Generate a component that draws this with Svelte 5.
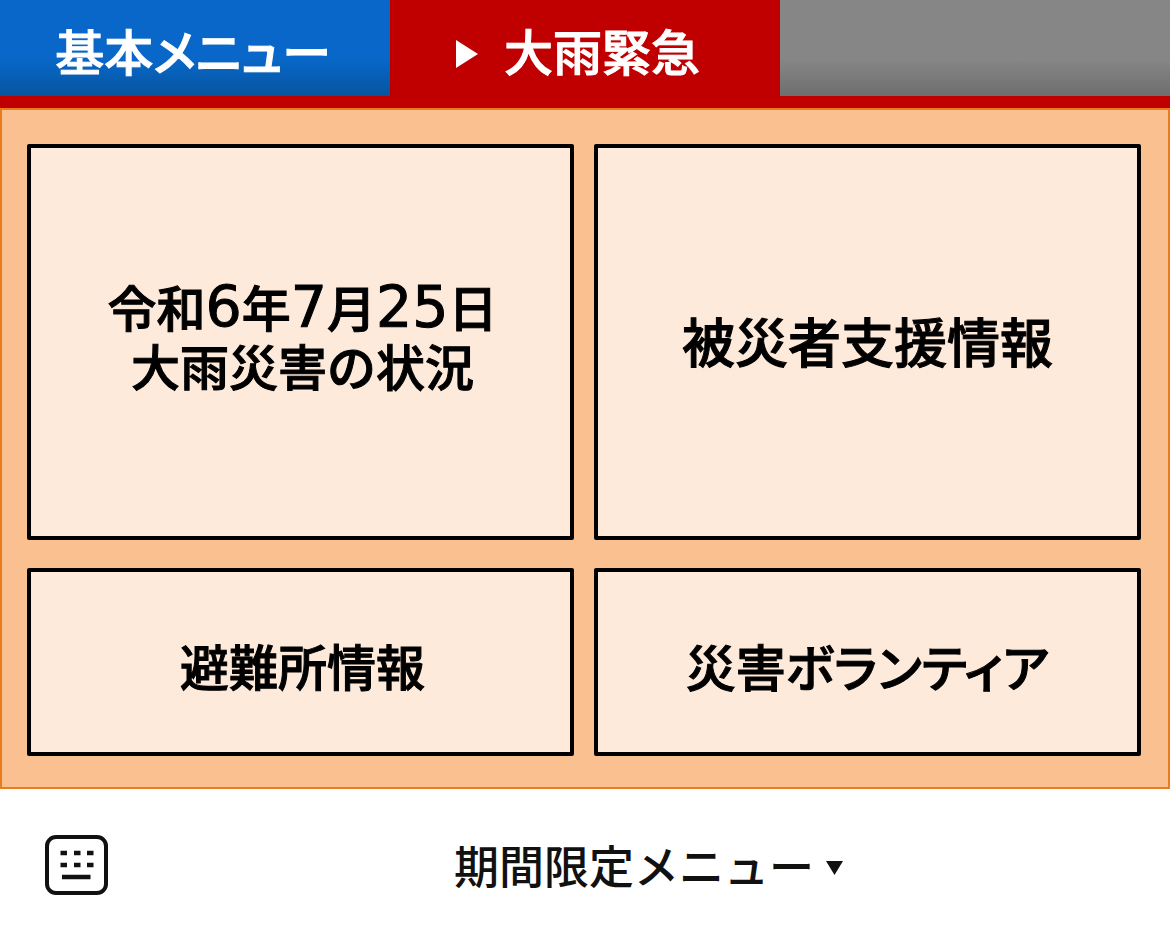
<script lang="ts">
	interface Card {
		id: string
		lines: string[]
	}

	const cards: Card[] = [
		{ id: 'status', lines: ['令和6年7月25日', '大雨災害の状況'] },
		{ id: 'support', lines: ['被災者支援情報'] },
		{ id: 'shelter', lines: ['避難所情報'] },
		{ id: 'volunteer', lines: ['災害ボランティア'] },
	]

	let active = $state('rain')

	// digits are set in a wider face than the kanji around them
	function splitDigits(line: string) {
		return line.split(/(\d+)/).filter(Boolean)
	}
</script>

<div class="menu">
	<nav class="tabs">
		<button class="tab tab-basic" onclick={() => active = 'basic'}>基本メニュー</button>
		<button class="tab tab-rain" aria-current={active === 'rain'} onclick={() => active = 'rain'}>
			<svg class="tab-arrow" viewBox="0 0 22 28" aria-hidden="true">
				<path d="M0 0 22 14 0 28Z" />
			</svg>
			大雨緊急
		</button>
		<span class="tab tab-empty"></span>
	</nav>

	<main class="panel">
		{#each cards as card (card.id)}
			<button class="card {card.id}">
				{#each card.lines as line}
					<span class="line">
						{#each splitDigits(line) as part}{#if /\d/.test(part)}<span class="digits">{part}</span>{:else}{part}{/if}{/each}
					</span>
				{/each}
			</button>
		{/each}
	</main>

	<footer class="bar">
		<button class="keyboard" aria-label="キーボード">
			<svg viewBox="0 0 64 60" aria-hidden="true">
				<rect x="2" y="2" width="59" height="56" rx="9" fill="none" stroke="#111" stroke-width="4" />
				<path
					d="M15.500 18h6.500M29 18h6.500M42 18h6.500M15.500 30h6.500M29 30h6.500M42 30h6.500M17 42h28.500"
					fill="none"
					stroke="#111"
					stroke-width="4.500"
				/>
			</svg>
		</button>
		<button class="toggle">
			期間限定メニュー
			<svg class="caret" viewBox="0 0 17 14" aria-hidden="true">
				<path d="M0 0H17L8.500 14Z" />
			</svg>
		</button>
	</footer>
</div>

<style>
	:global(body) {
		margin: 0;
		background: #fff;
	}

	.menu {
		font-family: 'Noto Sans CJK JP', sans-serif;
		font-weight: 500;
		color: #000;
	}

	button {
		margin: 0;
		padding: 0;
		border: none;
		background: none;
		font: inherit;
		color: inherit;
		cursor: pointer;
	}

	.tabs {
		display: grid;
		grid-template-columns: repeat(3, 1fr);
		border-bottom: 12px solid #c00000;
	}

	.tab {
		display: flex;
		align-items: center;
		justify-content: center;
		min-height: 96px;
		padding-top: 4px;
		box-sizing: border-box;
		font-size: 49px;
		font-feature-settings: 'palt';
		line-height: 58px;
		color: #fff;
		-webkit-text-stroke: 1px currentColor;
	}

	.tab-basic {
		padding-right: 4px;
		background: linear-gradient(#0867c8 62%, #07559f);
	}

	.tab-rain {
		gap: 26px;
		padding-right: 14px;
		background: #c00000;
	}

	.tab-empty {
		background: linear-gradient(#868686 62%, #6e6e6e);
	}

	.tab-arrow {
		width: 22px;
		height: 28px;
		margin-top: 8px;
		fill: #fff;
	}

	.panel {
		display: grid;
		grid-template-columns: 1fr 1fr;
		grid-template-rows: minmax(396px, auto) minmax(188px, auto);
		gap: 28px 20px;
		padding: 34px 27px 31px 25px;
		border: 2px solid #e97c1c;
		background: #fac090;
	}

	.card {
		display: flex;
		flex-direction: column;
		align-items: center;
		justify-content: center;
		border: 4px solid #000;
		border-radius: 2px;
		background: #fdeada;
		font-size: 49px;
		line-height: 58px;
		-webkit-text-stroke: 1px currentColor;
	}

	.status {
		padding: 0 0 14px 4px;
	}

	.support {
		padding-bottom: 4px;
		font-size: 53px;
	}

	.shelter {
		padding: 6px 0 0 4px;
	}

	.volunteer {
		padding-top: 6px;
		font-size: 50px;
		font-feature-settings: 'palt';
	}

	.line {
		display: block;
	}

	.digits {
		font-family: 'DejaVu Sans', sans-serif;
		font-size: 57px;
		line-height: 1;
	}

	.bar {
		display: grid;
		grid-template-columns: 64px 1fr;
		align-items: center;
		min-height: 155px;
		padding: 0 0 4px 45px;
		box-sizing: border-box;
		color: #111;
	}

	.keyboard svg {
		display: block;
		width: 64px;
		height: 60px;
	}

	.toggle {
		display: flex;
		align-items: center;
		justify-content: center;
		gap: 12px;
		padding-left: 18px;
		font-size: 45px;
		line-height: 58px;
	}

	.caret {
		width: 17px;
		height: 14px;
		margin-top: 6px;
		fill: #111;
	}
</style>
